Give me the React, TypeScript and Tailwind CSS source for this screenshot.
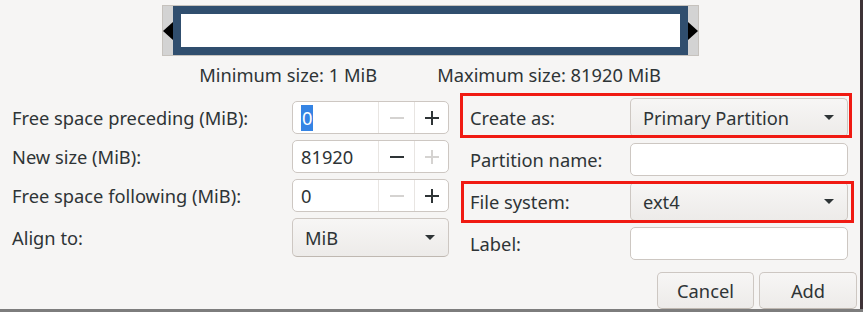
import React from "react";

const font = { fontFamily: '"Noto Sans", "Open Sans", sans-serif' };

function Minus({ on }: { on: boolean }) {
    return (
        <svg width="14" height="14" viewBox="0 0 14 14">
            <rect x="0" y="6" width="14" height="2" fill={on ? "#2e3436" : "#d5d3d1"} />
        </svg>
    );
}

function Plus({ on }: { on: boolean }) {
    return (
        <svg width="14" height="14" viewBox="0 0 14 14">
            <rect x="0" y="6" width="14" height="2" fill={on ? "#2e3436" : "#d5d3d1"} />
            <rect x="6" y="0" width="2" height="14" fill={on ? "#2e3436" : "#d5d3d1"} />
        </svg>
    );
}

function Caret() {
    return (
        <svg width="10" height="5" viewBox="0 0 10 5">
            <polygon points="0,0 10,0 5,5" fill="#2e3436" />
        </svg>
    );
}

function SpinRow({ label, value, minus, plus, selected }: { label: string; value: string; minus: boolean; plus: boolean; selected?: boolean }) {
    return (
        <div className="flex items-center h-[33px]">
            <span className="flex-1">{label}</span>
            <div className="flex w-[157px] h-[33px] rounded-[5px] border border-[#cdc7c2] bg-white overflow-hidden">
                <div className="w-[86px] flex items-center pl-[8px] border-r border-[#e8e5e2]">
                    {selected ? (
                        <span className="bg-[#3584e4] text-white h-[26px] leading-[26px] px-[1px]">{value}</span>
                    ) : (
                        <span>{value}</span>
                    )}
                </div>
                <div className="w-[36px] flex items-center justify-center border-r border-[#e8e5e2]">
                    <Minus on={minus} />
                </div>
                <div className="flex-1 flex items-center justify-center">
                    <Plus on={plus} />
                </div>
            </div>
        </div>
    );
}

function Combo({ text, width }: { text: string; width: string }) {
    return (
        <div className={`${width} h-[39px] flex items-center justify-between pl-[12px] pr-[13px] rounded-[5px] border border-[#cdc7c2] border-b-[#bfb8b1] bg-gradient-to-b from-[#f7f6f5] to-[#edebe9]`}>
            <span>{text}</span>
            <Caret />
        </div>
    );
}

export default function App() {
    return (
        <div className="w-[863px] h-[312px] bg-[#7d7d7d] overflow-hidden text-[18.3px] leading-[24px] text-[#2e3436]" style={font}>
            <div className="flex h-[309px]">
                <div className="w-[860px] h-[309px] bg-[#f6f5f4] flex flex-col">
                    {/* size bar */}
                    <div className="flex justify-center pt-[5px]">
                        <div className="flex w-[537px] h-[51px] bg-[#d3d3d3] border border-[#c6c2bd]">
                            <div className="w-[10px] flex items-center">
                                <svg width="10" height="18" viewBox="0 0 10 18">
                                    <polygon points="10,0 10,18 0,9" fill="#000" />
                                </svg>
                            </div>
                            <div className="w-[516px] border-[8px] border-[#304e6e] bg-white" />
                            <div className="flex-1 flex items-center">
                                <svg width="10" height="18" viewBox="0 0 10 18">
                                    <polygon points="0,0 0,18 10,9" fill="#000" />
                                </svg>
                            </div>
                        </div>
                    </div>
                    <div className="flex justify-center gap-[60px] mt-[7px] h-[24px]">
                        <span>Minimum size: 1 MiB</span>
                        <span>Maximum size: 81920 MiB</span>
                    </div>

                    {/* form */}
                    <div className="flex mt-[6px]">
                        <div className="w-[449px] pl-[12px] pt-[8px] flex flex-col gap-[6px]">
                            <SpinRow label="Free space preceding (MiB):" value="0" minus={false} plus={true} selected />
                            <SpinRow label="New size (MiB):" value="81920" minus={true} plus={false} />
                            <SpinRow label="Free space following (MiB):" value="0" minus={false} plus={true} />
                            <div className="flex items-center h-[39px]">
                                <span className="flex-1">Align to:</span>
                                <Combo text="MiB" width="w-[157px]" />
                            </div>
                        </div>
                        <div className="relative ml-[11px] w-[397px] pt-[5px] flex flex-col gap-[6px]">
                            <div className="flex items-center h-[39px] pl-[10px]">
                                <span className="w-[160px]">Create as:</span>
                                <Combo text="Primary Partition" width="w-[218px]" />
                            </div>
                            <div className="flex items-center h-[33px] pl-[10px]">
                                <span className="w-[160px]">Partition name:</span>
                                <div className="w-[218px] h-[33px] rounded-[5px] border border-[#cdc7c2] bg-white" />
                            </div>
                            <div className="flex items-center h-[39px] pl-[10px]">
                                <span className="w-[160px]">File system:</span>
                                <Combo text="ext4" width="w-[218px]" />
                            </div>
                            <div className="flex items-center h-[33px] pl-[10px]">
                                <span className="w-[160px]">Label:</span>
                                <div className="w-[218px] h-[33px] rounded-[5px] border border-[#cdc7c2] bg-white" />
                            </div>
                            <div className="flex justify-end gap-[5px] mt-[6px]">
                                <div className="w-[97px] h-[37px] flex items-center justify-center rounded-[5px] border border-[#cdc7c2] border-b-[#bfb8b1] bg-gradient-to-b from-[#f7f6f5] to-[#edebe9]">Cancel</div>
                                <div className="w-[98px] h-[37px] flex items-center justify-center rounded-[5px] border border-[#cdc7c2] border-b-[#bfb8b1] bg-gradient-to-b from-[#f7f6f5] to-[#edebe9]">Add</div>
                            </div>

                            {/* annotation boxes */}
                            <div className="absolute left-0 top-0 w-[392px] h-[45px] border-[3px] border-[#f01a12]" />
                            <div className="absolute left-[1px] top-[88px] w-[393px] h-[42px] border-[3px] border-[#f01a12]" />
                        </div>
                    </div>
                </div>
                <div className="flex-1 bg-[#3e3236]" />
            </div>
        </div>
    );
}
